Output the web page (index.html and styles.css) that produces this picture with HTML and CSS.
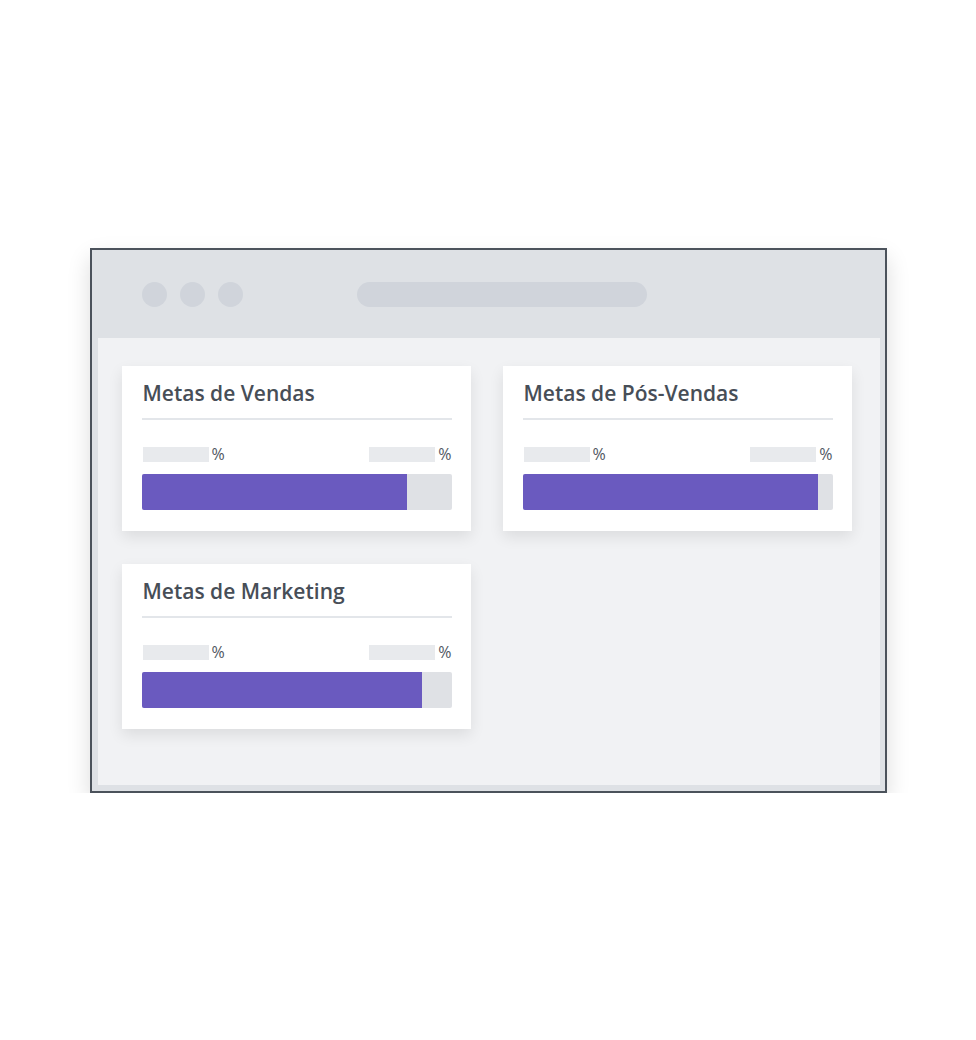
FILE: index.html
```html
<!DOCTYPE html>
<html lang="pt-BR">
<head>
    <meta charset="UTF-8">
    <meta name="viewport" content="width=device-width, initial-scale=1.0">
    <title>Metas</title>
    <link rel="stylesheet" href="styles.css">
</head>
<body>
    <div class="window">
        <div class="window-bar">
            <span class="dot"></span>
            <span class="dot"></span>
            <span class="dot"></span>
            <span class="url"></span>
        </div>
        <div class="viewport">
            <div class="card">
                <h2 class="card-title">Metas de Vendas</h2>
                <div class="labels">
                    <span class="label"><span class="ph"></span>%</span>
                    <span class="label"><span class="ph"></span>%</span>
                </div>
                <div class="progress">
                    <div class="progress-bar" style="width: 85.5%"></div>
                </div>
            </div>
            <div class="card">
                <h2 class="card-title">Metas de Pós-Vendas</h2>
                <div class="labels">
                    <span class="label"><span class="ph"></span>%</span>
                    <span class="label"><span class="ph"></span>%</span>
                </div>
                <div class="progress">
                    <div class="progress-bar" style="width: 95.2%"></div>
                </div>
            </div>
            <div class="card">
                <h2 class="card-title">Metas de Marketing</h2>
                <div class="labels">
                    <span class="label"><span class="ph"></span>%</span>
                    <span class="label"><span class="ph"></span>%</span>
                </div>
                <div class="progress">
                    <div class="progress-bar" style="width: 90.4%"></div>
                </div>
            </div>
        </div>
    </div>
</body>
</html>
```

FILE: styles.css
```css
body {
    margin: 0;
    padding: 0;
    background: #fff;
    font-family: 'Open Sans', sans-serif;
    color: #474e57;
}
.window {
    width: 797px;
    box-sizing: border-box;
    margin: 248px auto 0;
    border: 2px solid #4b525b;
    background: #dee1e5;
    box-shadow: 0 10px 22px rgba(0, 0, 0, 0.14);
}
.window-bar {
    height: 88px;
    display: flex;
    align-items: center;
    padding-left: 50px;
    gap: 13px;
}
.dot {
    width: 25px;
    height: 25px;
    border-radius: 50%;
    background: #d0d4db;
}
.url {
    width: 290px;
    height: 25px;
    margin-left: 101px;
    border-radius: 13px;
    background: #d0d4db;
}
.viewport {
    margin: 0 5px 6px 6px;
    background: #f1f2f4;
    padding: 28px 28px 56px 24px;
    display: grid;
    grid-template-columns: 349px 349px;
    column-gap: 32px;
    row-gap: 33px;
}
.card {
    background: #fff;
    padding: 0 19px 21px 20px;
    box-shadow: 0 6px 14px rgba(0, 0, 0, 0.09);
}
.card-title {
    margin: 0;
    padding: 13px 0 11px 1px;
    font-size: 21px;
    line-height: 28px;
    font-weight: 600;
    border-bottom: 2px solid #e3e6ea;
}
.labels {
    margin-top: 27px;
    padding-left: 1px;
    display: flex;
    justify-content: space-between;
}
.label {
    display: flex;
    align-items: flex-start;
    gap: 3px;
    font-size: 16px;
    font-weight: 400;
    line-height: 15px;
    color: #50575f;
}
.ph {
    width: 66px;
    height: 15px;
    background: #e8eaed;
}
.progress {
    margin-top: 12px;
    height: 36px;
    background: #dfe1e5;
    border-radius: 2px;
    overflow: hidden;
}
.progress-bar {
    height: 100%;
    background: #6a5abf;
}
```
